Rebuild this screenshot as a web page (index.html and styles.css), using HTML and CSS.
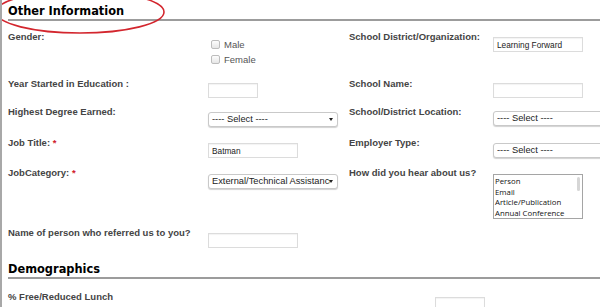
FILE: index.html
```html
<!DOCTYPE html>
<html>
<head>
<meta charset="utf-8">
<link rel="stylesheet" href="styles.css">
</head>
<body>
<div class="page">
  <svg class="circle" width="180" height="40" viewBox="0 0 180 40"><ellipse cx="80" cy="12" rx="84" ry="21" fill="none" stroke="#d3262e" stroke-width="1.6"/></svg>
  <h2 class="section-title">Other Information</h2>
  <div class="form-grid">
    <div class="lbl">Gender:</div>
    <div class="fld checks">
      <label class="chk"><span class="box"></span>Male</label>
      <label class="chk"><span class="box"></span>Female</label>
    </div>
    <div class="lbl">School District/Organization:</div>
    <div class="fld fld-6"><input class="txt w90" value="Learning Forward"></div>

    <div class="lbl">Year Started in Education :</div>
    <div class="fld"><input class="txt w50" value=""></div>
    <div class="lbl">School Name:</div>
    <div class="fld"><input class="txt w90" value=""></div>

    <div class="lbl">Highest Degree Earned:</div>
    <div class="fld fld-6"><span class="sel"><span class="sel-text">---- Select ----</span></span></div>
    <div class="lbl">School/District Location:</div>
    <div class="fld"><span class="sel"><span class="sel-text">---- Select ----</span></span></div>

    <div class="lbl">Job Title: <span class="req">*</span></div>
    <div class="fld fld-6"><input class="txt w90" value="Batman"></div>
    <div class="lbl">Employer Type:</div>
    <div class="fld fld-6"><span class="sel"><span class="sel-text">---- Select ----</span></span></div>

    <div class="lbl">JobCategory: <span class="req">*</span></div>
    <div class="fld fld-7"><span class="sel"><span class="sel-text">External/Technical Assistance</span></span></div>
    <div class="lbl">How did you hear about us?</div>
    <div class="fld fld-7">
      <div class="listbox">
        <div class="opt">Person</div>
        <div class="opt">Email</div>
        <div class="opt">Article/Publication</div>
        <div class="opt">Annual Conference</div>
        <span class="thumb"></span>
      </div>
    </div>

    <div class="lbl">Name of person who referred us to you?</div>
    <div class="fld fld-6"><input class="txt w90" value=""></div>
    <div></div>
    <div></div>
  </div>
  <h2 class="section-title demo">Demographics</h2>
  <div class="lunch-row">
    <div class="lbl lunch-lbl">% Free/Reduced Lunch</div>
    <input class="txt w50 lunch-input" value="">
  </div>
</div>
</body>
</html>
```
FILE: styles.css
```css
html, body {
  margin: 0;
  padding: 0;
  background: #fff;
  overflow: hidden;
}
body {
  width: 600px;
  height: 307px;
  border-left: 2px solid #a8a8a8;
  box-sizing: border-box;
}
.page {
  position: relative;
  padding-left: 6px;
  width: 700px;
}
.circle {
  position: absolute;
  left: -2px;
  top: 0;
  overflow: visible;
  z-index: 2;
}
.section-title {
  margin: 0;
  padding: 4px 0 1px 0;
  font: bold 11.4px/14px "DejaVu Sans", Verdana, sans-serif;
  color: #000;
  border-bottom: 2px solid #9c9c9c;
  width: 592px;
}
.form-grid {
  margin-top: 10px;
  display: grid;
  grid-template-columns: 200px 141px 144px 140px;
  grid-template-rows: 47px 28px 31px 30px 60px 30px;
}
.lbl {
  font: bold 9.5px/11px "Liberation Sans", Arial, sans-serif;
  color: #444;
  white-space: nowrap;
}
.req {
  color: #d0202a;
}
.fld {
  display: flex;
  align-items: flex-start;
  margin-top: 5px;
}
.fld-6 {
  margin-top: 6px;
}
.fld-7 {
  margin-top: 7px;
}
.checks {
  margin-top: 8px;
  flex-direction: column;
  gap: 4px;
}
.chk {
  display: flex;
  align-items: center;
  gap: 4px;
  padding-left: 3px;
  font: 9.5px/11px "Liberation Sans", Arial, sans-serif;
  color: #555;
}
.box {
  width: 7px;
  height: 7px;
  border: 1px solid #bdbdbd;
  border-radius: 2px;
  background: linear-gradient(#fdfdfd, #e6e6e6);
}
.txt {
  box-sizing: border-box;
  height: 15px;
  border: 1px solid #dcdcdc;
  box-shadow: inset 0 1px 1px rgba(0,0,0,0.05);
  padding: 0 3px;
  margin: 0;
  font: 8.3px "Liberation Sans", Arial, sans-serif;
  color: #222;
  background: #fff;
  outline: none;
}
.w90 { width: 90px; }
.w50 { width: 50px; }
.sel {
  position: relative;
  display: block;
  box-sizing: border-box;
  width: 130px;
  height: 15px;
  border: 1px solid #c9c9c9;
  border-radius: 3px;
  box-shadow: 0 1px 1px rgba(0,0,0,0.18);
  background: #fff;
  font: 9.3px/13px "Liberation Sans", Arial, sans-serif;
  color: #222;
  padding-left: 3px;
  overflow: hidden;
}
.sel-text {
  display: block;
  width: 118px;
  overflow: hidden;
  white-space: nowrap;
}
.sel::after {
  content: "";
  position: absolute;
  right: 4px;
  top: 5px;
  border-left: 2.5px solid transparent;
  border-right: 2.5px solid transparent;
  border-top: 3.5px solid #222;
}
.listbox {
  position: relative;
  box-sizing: border-box;
  width: 90px;
  height: 45px;
  border: 1px solid #a5a5a5;
  padding: 1px 0 0 1px;
  font: 7.8px/10.6px "Open Sans", "DejaVu Sans", sans-serif;
  color: #111;
  overflow: hidden;
}
.thumb {
  position: absolute;
  right: 2px;
  top: 2px;
  width: 3px;
  height: 14px;
  border-radius: 2px;
  background: #d6d6d6;
}
.demo {
  margin-top: 1px;
  padding-top: 4px;
}
.lunch-row {
  margin-top: 12px;
  display: flex;
  align-items: flex-start;
}
.lunch-lbl {
  width: 427px;
}
.lunch-input {
  margin-top: 6px;
}
```
